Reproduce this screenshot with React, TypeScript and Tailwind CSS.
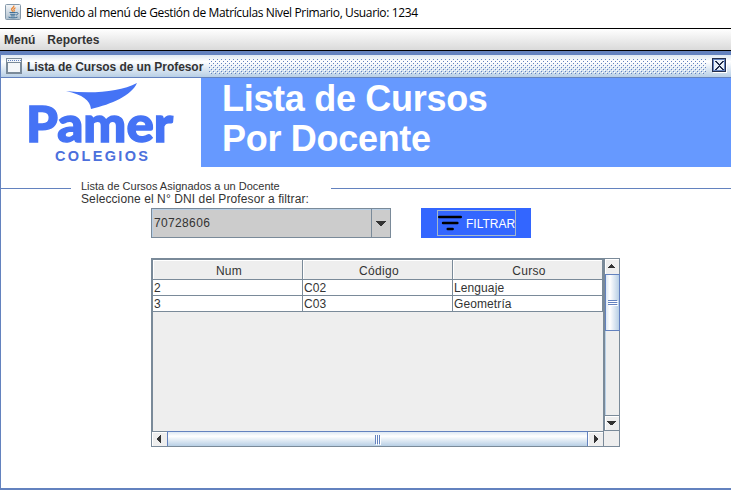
import React from "react";

const ocean = "from-[#dde8f3] via-white via-30% to-[#b8cfe5]";
const arial = "font-['Liberation_Sans',Arial,sans-serif]";

function JavaIcon() {
  return (
    <svg width="16" height="16" viewBox="0 0 16 16" className="block">
      <defs>
        <linearGradient id="jv" x1="0" y1="0" x2="0" y2="1">
          <stop offset="0" stopColor="#f4f6f8" />
          <stop offset="1" stopColor="#aebfcd" />
        </linearGradient>
      </defs>
      <rect x=".5" y=".5" width="15" height="15" rx="1" fill="url(#jv)" stroke="#8498aa" />
      <path d="M8.8 1.5c.8 1.8-2.7 2.5-2.2 4.2.2.8 1 1.2 1.2 2M10.5 3.8C8.6 4.8 8.6 5.5 9.1 6.2c.4.6.1 1-.4 1.5" fill="none" stroke="#ec7d25" strokeWidth="1.2" />
      <path d="M4.5 8.5h6.3M5.2 10.3h5.3M5.8 11.9h4M11 8.6c3-.5 2.5 2-.1 2.5M3.5 13.1c2.5 1 6.5 1 9 0" fill="none" stroke="#3f6f96" strokeWidth="1" />
    </svg>
  );
}

function FrameIcon() {
  return (
    <svg width="16" height="16" viewBox="0 0 16 16" shapeRendering="crispEdges" className="block">
      <rect x="0" y="0" width="16" height="16" rx="1" fill="#7a8a99" />
      <rect x="1" y="1" width="14" height="3" fill="#f3f7fb" />
      <rect x="2" y="5" width="12" height="9" fill="#f4f7fa" />
      <path d="M2 2.5h13" stroke="#6382bf" strokeDasharray="1 1" />
      <path d="M1 4.5h14" stroke="#7a8a99" />
    </svg>
  );
}

function Bumps() {
  return (
    <svg width="497" height="15" shapeRendering="crispEdges" className="block">
      <defs>
        <pattern id="bumps" width="4" height="4" patternUnits="userSpaceOnUse">
          <path d="M0 0h1v1h-1zM2 2h1v1h-1z" fill="#6382bf" />
          <path d="M1 1h1v1h-1zM3 3h1v1h-1z" fill="#fff" />
        </pattern>
      </defs>
      <rect width="497" height="15" fill="url(#bumps)" />
    </svg>
  );
}

function CloseIcon() {
  return (
    <svg width="15" height="15" viewBox="0 0 15 15" shapeRendering="crispEdges" className="block">
      <path d="M14.5 1v13.5H1" fill="none" stroke="#fff" />
      <rect x=".5" y=".5" width="13" height="13" fill="none" stroke="#222d4b" />
      <path d="M1.5 12.5v-11h11" fill="none" stroke="#6382bf" />
      <path d="M12.5 2v10.5H2" fill="none" stroke="#6382bf" />
      <rect x="2" y="2" width="10" height="10" fill="#e8f0f7" />
      <path d="M3 3h2v1h1v1h1v1h1v-1h1v-1h1v-1h2v1h-1v1h-1v1h-1v1h-1v1h1v1h1v1h1v1h1v1h-2v-1h-1v-1h-1v-1h-1v1h-1v1h-1v1h-2v-1h1v-1h1v-1h1v-1h1v-1h-1v-1h-1v-1h-1v-1h-1z" fill="#222d4b" />
    </svg>
  );
}

function Logo() {
  return (
    <svg width="200" height="89" viewBox="1 78 200 89" className="block shrink-0 bg-white">
      <path d="M66 91C92 94 120 92 137 83C131 96 112 104 91 109C90 100 83 95 66 91Z" fill="#4573f5" />
      <text x="26" y="142" textLength="147" lengthAdjust="spacingAndGlyphs" fill="#4573f5" stroke="#4573f5" strokeWidth="1.4" fontFamily="Lato" fontWeight="900" fontSize="50">Pamer</text>
      <text x="55" y="160.5" textLength="93" lengthAdjust="spacing" fill="#4c70dc" fontFamily="Liberation Sans" fontWeight="700" fontSize="14.5">
        COLEGIOS
      </text>
    </svg>
  );
}

function Arrow({ dir }: { dir: "up" | "down" | "left" | "right" }) {
  const paths = {
    up: "M3 0h1v1h1v1h1v1h1v1h-7v-1h1v-1h1v-1h1z",
    down: "M0 0h9v1h-1v1h-1v1h-1v1h-3v-1h-1v-1h-1v-1h-1z",
    left: "M3 0h1v8h-1v-1h-1v-1h-1v-1h-1v-2h1v-1h1v-1h1z",
    right: "M0 0h1v1h1v1h1v1h1v2h-1v1h-1v1h-1v1h-1z",
  };
  const width = { up: 7, down: 9, left: 4, right: 4 }[dir];
  const height = dir === "up" || dir === "down" ? 4 : 8;
  return (
    <svg width={width} height={height} shapeRendering="crispEdges" className="block" fill="#333">
      <path d={paths[dir]} />
    </svg>
  );
}

function Header({ children, w }: { children: string; w: string }) {
  return (
    <div className={`${w} h-5 border-r border-b border-[#7a8a99] bg-[#eee] pl-[3px] text-center leading-[22px] tracking-[0.3px] shadow-[inset_1px_1px_0_#fff]`}>
      {children}
    </div>
  );
}

function Cell({ children, w }: { children: string; w: string }) {
  return (
    <div className={`${w} h-4 border-r border-b border-[#7a8a99] bg-white pl-px leading-[16px] tracking-[0.1px]`}>{children}</div>
  );
}

const rows = [
  ["2", "C02", "Lenguaje"],
  ["3", "C03", "Geometría"],
];
const widths = ["w-[150px]", "w-[150px]", "w-[150px]"];

export default function App() {
  return (
    <div className={`flex h-[490px] w-[731px] flex-col overflow-hidden bg-white text-[12px] whitespace-nowrap text-[#333] ${arial}`}>
      <div className="flex h-7 shrink-0 pt-1 pl-[5px]">
        <JavaIcon />
        <span className="ml-[5px] font-['Open_Sans',sans-serif] text-[12px] leading-[18px] tracking-[-0.37px] text-black">
          Bienvenido al menú de Gestión de Matrículas Nivel Primario, Usuario: 1234
        </span>
      </div>
      <div className="flex h-[23px] shrink-0 gap-3 border-y border-black bg-linear-to-b from-white to-[#dadada] pl-1 leading-[23px] font-bold">
        <span>Menú</span>
        <span>Reportes</span>
      </div>
      <div className="h-1 shrink-0 bg-[#6382bf]" />
      <div className="flex flex-1 flex-col border-b-2 border-l border-[#6382bf]">
        <div className={`flex h-[23px] shrink-0 border-b border-[#6382bf] bg-linear-to-b ${ocean} pl-[5px]`}>
          <div className="pt-[3px]"><FrameIcon /></div>
          <span className="ml-[5px] w-[182px] leading-6 font-bold tracking-[-0.06px]">Lista de Cursos de un Profesor</span>
          <div className="pt-1"><Bumps /></div>
          <div className="ml-[6px] pt-[3px]"><CloseIcon /></div>
        </div>
        <div className="flex h-[89px] shrink-0">
          <Logo />
          <h1 className="flex-1 bg-[#6699ff] pt-px pl-[21px] text-[36px] leading-10 font-bold tracking-[-0.3px] text-white">
            Lista de Cursos
            <br />
            Por Docente
          </h1>
        </div>
        <div className="mt-[13px] flex h-[12px] shrink-0 items-start">
          <div className="mt-2 h-px w-[70px] bg-[#6382bf]" />
          <span className="w-[260px] pl-[10px] text-[11px] leading-[13px]">Lista de Cursos Asignados a un Docente</span>
          <div className="mt-2 h-px flex-1 bg-[#6382bf]" />
        </div>
        <span className="h-4 shrink-0 pl-20 leading-[15px] tracking-[0.1px]">Seleccione el N° DNI del Profesor a filtrar:</span>
        <div className="flex h-[30px] shrink-0 gap-[30px] pl-[150px]">
          <div className="flex w-[240px] border border-[#7a8a99] bg-[#ccc] shadow-[inset_1px_1px_0_#b8cfe5]">
            <span className="flex-1 pl-[2px] leading-[28px] tracking-[0.35px]">70728606</span>
            <div className="flex w-[19px] justify-center border-l border-[#7a8a99] pt-3">
              <svg width="10" height="5" shapeRendering="crispEdges" className="block" fill="#333">
                <path d="M0 0h10v1h-1v1h-1v1h-1v1h-1v1h-2v-1h-1v-1h-1v-1h-1v-1h-1z" />
              </svg>
            </div>
          </div>
          <div className="w-[110px] bg-[#3366ff] pt-[2px] pl-4">
            <div className="flex h-[26px] w-[79px] items-center border border-[#a3b8cc] text-white">
              <svg width="24" height="16" viewBox="0 0 24 16" className="block shrink-0" stroke="#000" strokeWidth="2.4" strokeLinecap="round">
                <path d="M1.2 2h21.6M5 8h14.4M9.7 14h5" />
              </svg>
              <span className="ml-1 pt-px">FILTRAR</span>
            </div>
          </div>
        </div>
        <div className="mt-5 ml-[150px] flex h-[189px] w-[469px] flex-col">
          <div className="flex h-[173px]">
            <div className="w-[454px] border-2 border-b-0 border-[#7a8a99] bg-[#eee]">
              <div className="flex">
                {["Num", "Código", "Curso"].map((t, i) => <Header key={t} w={widths[i]}>{t}</Header>)}
              </div>
              {rows.map((row) => (
                <div key={row[0]} className="flex">
                  {row.map((t, i) => <Cell key={t} w={widths[i]}>{t}</Cell>)}
                </div>
              ))}
            </div>
            <div className="flex w-[15px] flex-col border-t border-r border-[#7a8a99] bg-[#eee] shadow-[inset_1px_1px_0_#b8cfe5]">
              <div className="flex h-[15px] items-start bg-[#eee] pt-[5px] pl-[3px] shadow-[inset_1px_1px_0_#fff]"><Arrow dir="up" /></div>
              <div className="-mr-px flex h-[57px] flex-col items-center justify-center gap-px border border-[#6382bf] bg-linear-to-r from-[#dde8f3] via-white via-30% to-[#b8cfe5]">
                <i className="h-px w-[9px] bg-[#6382bf] shadow-[1px_1px_0_#fff]" />
                <i className="h-px w-[9px] bg-[#6382bf] shadow-[1px_1px_0_#fff]" />
                <i className="h-px w-[9px] bg-[#6382bf] shadow-[1px_1px_0_#fff]" />
              </div>
              <div className="flex-1" />
              <div className="flex h-4 items-center border-y border-[#7a8a99] bg-[#eee] pl-[2px] shadow-[inset_1px_1px_0_#fff]"><Arrow dir="down" /></div>
            </div>
          </div>
          <div className="flex h-4 border-r border-b border-l border-[#7a8a99] bg-[#eee]">
            <div className="flex w-[15px] items-center border-t border-[#7a8a99] pl-[5px] shadow-[inset_1px_1px_0_#fff]"><Arrow dir="left" /></div>
            <div className={`flex w-[421px] items-center justify-center gap-px border border-b-0 border-[#6382bf] bg-linear-to-b ${ocean}`}>
              <i className="h-[9px] w-px bg-[#6382bf] shadow-[1px_1px_0_#fff]" />
              <i className="h-[9px] w-px bg-[#6382bf] shadow-[1px_1px_0_#fff]" />
              <i className="h-[9px] w-px bg-[#6382bf] shadow-[1px_1px_0_#fff]" />
            </div>
            <div className="flex w-4 items-center justify-center border-t border-r border-[#7a8a99] shadow-[inset_1px_1px_0_#fff]"><Arrow dir="right" /></div>
          </div>
        </div>
      </div>
    </div>
  );
}
